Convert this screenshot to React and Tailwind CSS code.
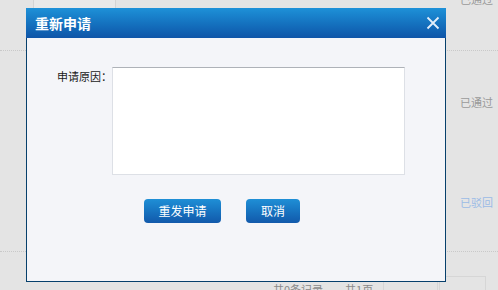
import React from "react";

const font = { fontFamily: '"Noto Sans CJK SC", "Noto Sans", sans-serif' };

export default function App() {
  return (
    <div className="relative w-[498px] h-[290px] overflow-hidden bg-[#e4e4e4]" style={font}>
      {/* background page */}
      <div className="flex flex-col">
        <div className="relative h-[51px] border-b border-dotted border-[#c9c9c9] flex">
          <div className="ml-[33px] w-[83px] h-[8px] bg-[#e9e9e9] border-x border-[#d4d4d4]" />
          <div className="ml-auto mr-[5px] mt-[-8px] text-[11px] leading-[14px] text-[#9a9a9a] whitespace-nowrap">已通过</div>
        </div>
        <div className="h-[201px] border-b border-dotted border-[#c9c9c9] flex flex-col items-end pr-[5px]">
          <div className="mt-[44px] text-[11px] leading-[14px] text-[#9a9a9a] whitespace-nowrap">已通过</div>
          <div className="mt-[86px] text-[11px] leading-[14px] text-[#9bbbe6] whitespace-nowrap">已驳回</div>
        </div>
        <div className="h-[38px] flex items-start">
          <div className="ml-[273px] mt-[30px] text-[11px] leading-[14px] text-[#8a8a8a] flex gap-[22px] whitespace-nowrap">
            <span>共0条记录</span>
            <span>共1页</span>
          </div>
          <div className="ml-[10px] mt-[24px] w-[55px] h-[20px] border border-[#d6d6d6]" />
          <div className="ml-[1px] mt-[24px] w-[47px] h-[20px] border border-[#d6d6d6]" />
        </div>
      </div>

      {/* dialog */}
      <div className="absolute left-[26px] top-[8px] w-[420px] flex flex-col">
        <div className="h-[30px] bg-gradient-to-b from-[#1e91d8] to-[#0f55a8] flex items-center justify-between pl-[9px] pr-[6px]">
          <span className="text-white font-bold text-[14px] leading-none">重新申请</span>
          <svg width="14" height="14" viewBox="0 0 14 14">
            <path d="M1.5 1.5 L12.5 12.5 M12.5 1.5 L1.5 12.5" stroke="#e3eefa" strokeWidth="1.8" />
          </svg>
        </div>
        <div className="h-[244px] bg-[#f4f5f9] border-x border-b border-[#07406c] flex flex-col">
          <div className="flex mt-[29px]">
            <span className="ml-[30px] mt-[2px] w-[55px] text-[11px] leading-[14px] text-[#1a1a1a] whitespace-nowrap">申请原因：</span>
            <textarea className="w-[293px] h-[108px] bg-white border border-[#dde0e6] border-t-[#aeb2b8] resize-none outline-none" />
          </div>
          <div className="flex mt-[24px] ml-[117px] gap-[25px]">
            <button className="w-[77px] h-[24px] rounded-[4px] bg-gradient-to-b from-[#1f8fd6] to-[#1259ab] text-white text-[12px] leading-none">重发申请</button>
            <button className="w-[54px] h-[24px] rounded-[4px] bg-gradient-to-b from-[#1f8fd6] to-[#1259ab] text-white text-[12px] leading-none">取消</button>
          </div>
        </div>
      </div>
    </div>
  );
}
